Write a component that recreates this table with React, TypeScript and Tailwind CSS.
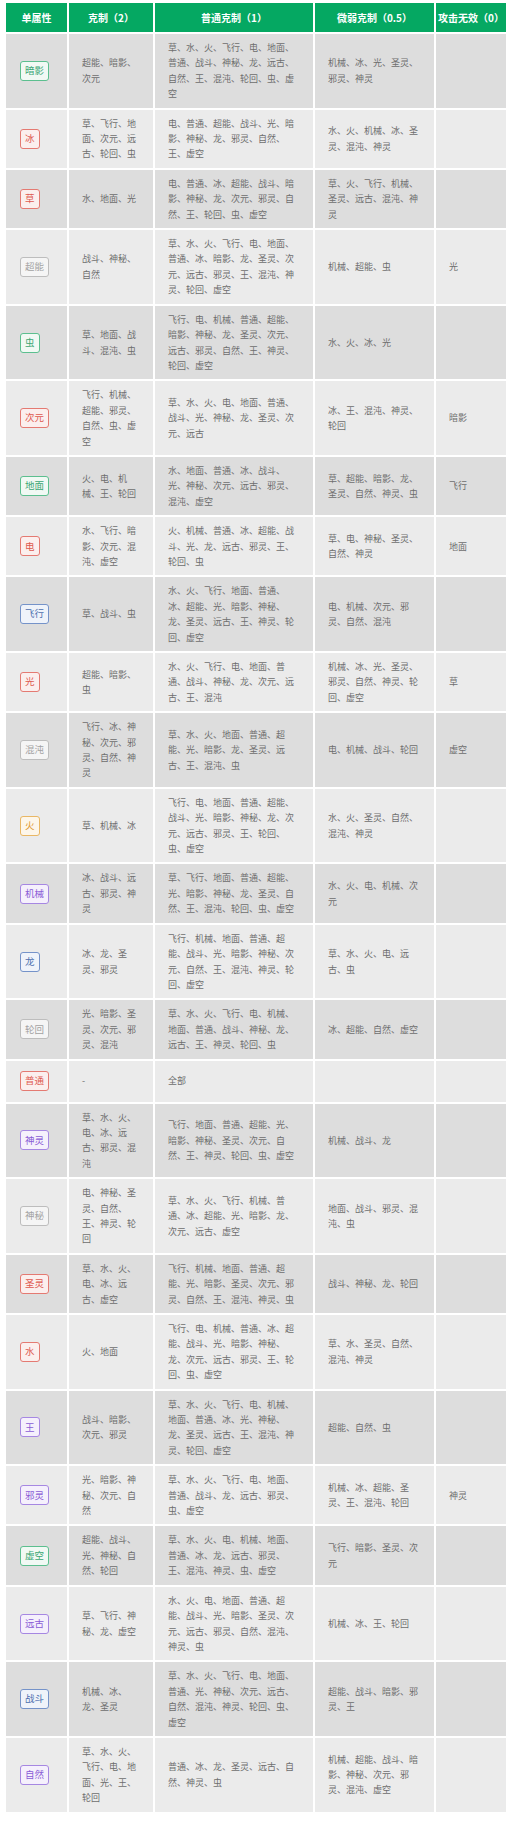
type Tone = 'green' | 'red' | 'gray' | 'blue' | 'purple' | 'orange';

// badge styles per attribute colour
const toneClass: Record<Tone, string> = {
  green: 'border-[#5cbf8f] text-[#3aa673] bg-[#f1f9f4]',
  red: 'border-[#e47a72] text-[#de5a50] bg-[#fbefee]',
  gray: 'border-[#bdbdbd] text-[#a3a3a3] bg-[#f5f5f5]',
  blue: 'border-[#7593c9] text-[#4d6fae] bg-[#eff3fa]',
  purple: 'border-[#a687e2] text-[#8a5cd6] bg-[#f5f0fc]',
  orange: 'border-[#e9b765] text-[#e0962e] bg-[#fdf6ea]',
};

interface Row {
  name: string;
  tone: Tone;
  strong: string;
  normal: string;
  weak: string;
  none?: string;
}

const rows: Row[] = [
  { name: '暗影', tone: 'green', strong: '超能、暗影、次元', normal: '草、水、火、飞行、电、地面、普通、战斗、神秘、龙、远古、自然、王、混沌、轮回、虫、虚空', weak: '机械、冰、光、圣灵、邪灵、神灵' },
  { name: '冰', tone: 'red', strong: '草、飞行、地面、次元、远古、轮回、虫', normal: '电、普通、超能、战斗、光、暗影、神秘、龙、邪灵、自然、王、虚空', weak: '水、火、机械、冰、圣灵、混沌、神灵' },
  { name: '草', tone: 'red', strong: '水、地面、光', normal: '电、普通、冰、超能、战斗、暗影、神秘、龙、次元、邪灵、自然、王、轮回、虫、虚空', weak: '草、火、飞行、机械、圣灵、远古、混沌、神灵' },
  { name: '超能', tone: 'gray', strong: '战斗、神秘、自然', normal: '草、水、火、飞行、电、地面、普通、冰、暗影、龙、圣灵、次元、远古、邪灵、王、混沌、神灵、轮回、虚空', weak: '机械、超能、虫', none: '光' },
  { name: '虫', tone: 'green', strong: '草、地面、战斗、混沌、虫', normal: '飞行、电、机械、普通、超能、暗影、神秘、龙、圣灵、次元、远古、邪灵、自然、王、神灵、轮回、虚空', weak: '水、火、冰、光' },
  { name: '次元', tone: 'red', strong: '飞行、机械、超能、邪灵、自然、虫、虚空', normal: '草、水、火、电、地面、普通、战斗、光、神秘、龙、圣灵、次元、远古', weak: '冰、王、混沌、神灵、轮回', none: '暗影' },
  { name: '地面', tone: 'green', strong: '火、电、机械、王、轮回', normal: '水、地面、普通、冰、战斗、光、神秘、次元、远古、邪灵、混沌、虚空', weak: '草、超能、暗影、龙、圣灵、自然、神灵、虫', none: '飞行' },
  { name: '电', tone: 'red', strong: '水、飞行、暗影、次元、混沌、虚空', normal: '火、机械、普通、冰、超能、战斗、光、龙、远古、邪灵、王、轮回、虫', weak: '草、电、神秘、圣灵、自然、神灵', none: '地面' },
  { name: '飞行', tone: 'blue', strong: '草、战斗、虫', normal: '水、火、飞行、地面、普通、冰、超能、光、暗影、神秘、龙、圣灵、远古、王、神灵、轮回、虚空', weak: '电、机械、次元、邪灵、自然、混沌' },
  { name: '光', tone: 'red', strong: '超能、暗影、虫', normal: '水、火、飞行、电、地面、普通、战斗、神秘、龙、次元、远古、王、混沌', weak: '机械、冰、光、圣灵、邪灵、自然、神灵、轮回、虚空', none: '草' },
  { name: '混沌', tone: 'gray', strong: '飞行、冰、神秘、次元、邪灵、自然、神灵', normal: '草、水、火、地面、普通、超能、光、暗影、龙、圣灵、远古、王、混沌、虫', weak: '电、机械、战斗、轮回', none: '虚空' },
  { name: '火', tone: 'orange', strong: '草、机械、冰', normal: '飞行、电、地面、普通、超能、战斗、光、暗影、神秘、龙、次元、远古、邪灵、王、轮回、虫、虚空', weak: '水、火、圣灵、自然、混沌、神灵' },
  { name: '机械', tone: 'purple', strong: '冰、战斗、远古、邪灵、神灵', normal: '草、飞行、地面、普通、超能、光、暗影、神秘、龙、圣灵、自然、王、混沌、轮回、虫、虚空', weak: '水、火、电、机械、次元' },
  { name: '龙', tone: 'blue', strong: '冰、龙、圣灵、邪灵', normal: '飞行、机械、地面、普通、超能、战斗、光、暗影、神秘、次元、自然、王、混沌、神灵、轮回、虚空', weak: '草、水、火、电、远古、虫' },
  { name: '轮回', tone: 'gray', strong: '光、暗影、圣灵、次元、邪灵、混沌', normal: '草、水、火、飞行、电、机械、地面、普通、战斗、神秘、龙、远古、王、神灵、轮回、虫', weak: '冰、超能、自然、虚空' },
  { name: '普通', tone: 'red', strong: '-', normal: '全部', weak: '' },
  { name: '神灵', tone: 'purple', strong: '草、水、火、电、冰、远古、邪灵、混沌', normal: '飞行、地面、普通、超能、光、暗影、神秘、圣灵、次元、自然、王、神灵、轮回、虫、虚空', weak: '机械、战斗、龙' },
  { name: '神秘', tone: 'gray', strong: '电、神秘、圣灵、自然、王、神灵、轮回', normal: '草、水、火、飞行、机械、普通、冰、超能、光、暗影、龙、次元、远古、虚空', weak: '地面、战斗、邪灵、混沌、虫' },
  { name: '圣灵', tone: 'red', strong: '草、水、火、电、冰、远古、虚空', normal: '飞行、机械、地面、普通、超能、光、暗影、圣灵、次元、邪灵、自然、王、混沌、神灵、虫', weak: '战斗、神秘、龙、轮回' },
  { name: '水', tone: 'red', strong: '火、地面', normal: '飞行、电、机械、普通、冰、超能、战斗、光、暗影、神秘、龙、次元、远古、邪灵、王、轮回、虫、虚空', weak: '草、水、圣灵、自然、混沌、神灵' },
  { name: '王', tone: 'purple', strong: '战斗、暗影、次元、邪灵', normal: '草、水、火、飞行、电、机械、地面、普通、冰、光、神秘、龙、圣灵、远古、王、混沌、神灵、轮回、虚空', weak: '超能、自然、虫' },
  { name: '邪灵', tone: 'purple', strong: '光、暗影、神秘、次元、自然', normal: '草、水、火、飞行、电、地面、普通、战斗、龙、远古、邪灵、虫、虚空', weak: '机械、冰、超能、圣灵、王、混沌、轮回', none: '神灵' },
  { name: '虚空', tone: 'green', strong: '超能、战斗、光、神秘、自然、轮回', normal: '草、水、火、电、机械、地面、普通、冰、龙、远古、邪灵、王、混沌、神灵、虫、虚空', weak: '飞行、暗影、圣灵、次元' },
  { name: '远古', tone: 'purple', strong: '草、飞行、神秘、龙、虚空', normal: '水、火、电、地面、普通、超能、战斗、光、暗影、圣灵、次元、远古、邪灵、自然、混沌、神灵、虫', weak: '机械、冰、王、轮回' },
  { name: '战斗', tone: 'blue', strong: '机械、冰、龙、圣灵', normal: '草、水、火、飞行、电、地面、普通、光、神秘、次元、远古、自然、混沌、神灵、轮回、虫、虚空', weak: '超能、战斗、暗影、邪灵、王' },
  { name: '自然', tone: 'purple', strong: '草、水、火、飞行、电、地面、光、王、轮回', normal: '普通、冰、龙、圣灵、远古、自然、神灵、虫', weak: '机械、超能、战斗、暗影、神秘、次元、邪灵、混沌、虚空' },
];

const headers = ['单属性', '克制（2）', '普通克制（1）', '微弱克制（0.5）', '攻击无效（0）'];

function Badge({ name, tone }: { name: string; tone: Tone }) {
  return (
    <div className="py-[4.5px]">
      <span
        className={`inline-flex h-[20px] items-center rounded-[3px] border px-[4px] text-[9.5px] leading-none ${toneClass[tone]}`}
      >
        {name}
      </span>
    </div>
  );
}

export default function App() {
  return (
    <div
      className="min-h-[1833px] bg-white pl-[4px] pt-[1px]"
      style={{ fontFamily: '"Noto Sans CJK SC", "Noto Sans", sans-serif' }}
    >
      <table className="w-[504px] table-fixed border-separate border-spacing-[2px]">
        <colgroup>
          <col className="w-[61px]" />
          <col className="w-[84px]" />
          <col className="w-[158px]" />
          <col className="w-[119px]" />
          <col className="w-[70px]" />
        </colgroup>
        <thead>
          <tr>
            {headers.map((h) => (
              <th
                key={h}
                className="h-[29px] whitespace-nowrap bg-[#05a862] p-0 text-center text-[10px] font-bold text-white"
              >
                {h}
              </th>
            ))}
          </tr>
        </thead>
        <tbody className="text-[9px] leading-[15.4px] text-[#6e6e6e]">
          {rows.map((r, i) => {
            const bg = i % 2 === 0 ? 'bg-[#dddddd]' : 'bg-[#ebebeb]';
            return (
              <tr key={r.name}>
                <td className={`${bg} py-[6px] pl-[14px] align-middle`}>
                  <Badge name={r.name} tone={r.tone} />
                </td>
                <td className={`${bg} px-[13px] py-[6px] align-middle`}>{r.strong}</td>
                <td className={`${bg} px-[13px] py-[6px] align-middle`}>{r.normal}</td>
                <td className={`${bg} px-[13px] py-[6px] align-middle`}>{r.weak}</td>
                <td className={`${bg} px-[13px] py-[6px] align-middle`}>{r.none ?? ''}</td>
              </tr>
            );
          })}
        </tbody>
      </table>
    </div>
  );
}
